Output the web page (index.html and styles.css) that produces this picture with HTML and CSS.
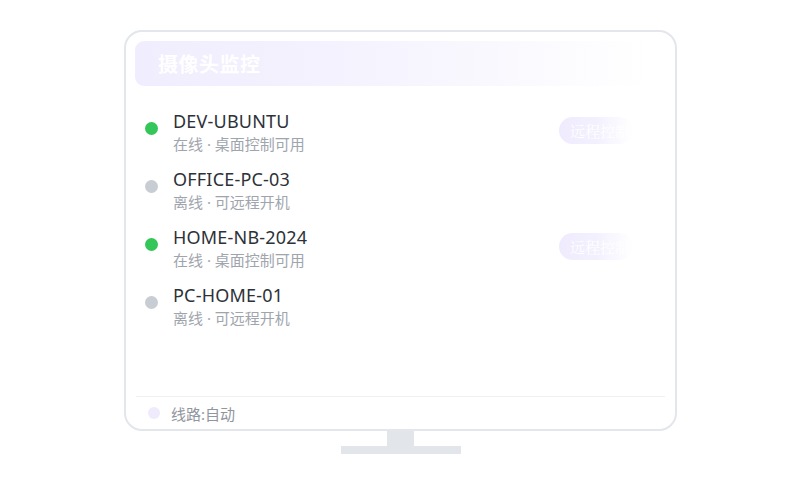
FILE: index.html
```html
<!DOCTYPE html>
<html lang="zh">
<head>
<meta charset="utf-8">
<link rel="stylesheet" href="styles.css">
</head>
<body>
<div class="desk">
  <div class="monitor">
    <div class="header"><span class="title">摄像头监控</span></div>
    <div class="list">
      <div class="row">
        <span class="dot on"></span>
        <div class="info"><div class="name">DEV-UBUNTU</div><div class="sub">在线 · 桌面控制可用</div></div>
        <span class="btn">远程控制</span>
      </div>
      <div class="row">
        <span class="dot off"></span>
        <div class="info"><div class="name">OFFICE-PC-03</div><div class="sub">离线 · 可远程开机</div></div>
      </div>
      <div class="row">
        <span class="dot on"></span>
        <div class="info"><div class="name">HOME-NB-2024</div><div class="sub">在线 · 桌面控制可用</div></div>
        <span class="btn">远程控制</span>
      </div>
      <div class="row">
        <span class="dot off"></span>
        <div class="info"><div class="name">PC-HOME-01</div><div class="sub">离线 · 可远程开机</div></div>
      </div>
    </div>
    <div class="footer"><span class="fdot"></span><span class="ftext">线路:自动</span></div>
  </div>
  <div class="neck"></div>
  <div class="base"></div>
</div>
</body>
</html>
```

FILE: styles.css
```css
html, body { margin: 0; padding: 0; background: #ffffff; }
body { font-family: "Noto Sans", "Noto Sans CJK SC", sans-serif; }
.desk { width: 553px; margin: 30px 0 0 124px; display: flex; flex-direction: column; align-items: center; }
.monitor {
  box-sizing: border-box; width: 553px; height: 401px;
  border: 2px solid #e3e6ea; border-radius: 18px;
  padding: 9px 10px 0 9px;
  display: flex; flex-direction: column;
  background: #fff;
}
.header {
  height: 45px; border-radius: 9px;
  background: linear-gradient(90deg, #f0edfe 0%, #f5f3fe 45%, rgba(255,255,255,0) 100%);
  display: flex; align-items: center; padding-left: 23px;
  margin-right: 14px;
}
.title { color: #ffffff; font-size: 20px; font-weight: 700; font-family: "Noto Sans CJK SC", sans-serif; letter-spacing: 0.5px; }
.list { flex: 1; padding: 24px 0 0 10px; display: flex; flex-direction: column; gap: 14px; }
.row { display: flex; align-items: flex-start; height: 44px; padding-right: 32px; }
.dot { width: 13px; height: 13px; border-radius: 50%; margin-top: 12px; flex: none; }
.dot.on { background: #34c659; }
.dot.off { background: #c8ccd3; }
.info { margin-left: 15px; display: flex; flex-direction: column; gap: 2px; }
.name { font-size: 18px; line-height: 22px; color: #2d3138; letter-spacing: 0.2px; }
.sub { font-size: 15px; line-height: 20px; color: #a0a5ad; }
.btn {
  margin-left: auto; margin-top: 7px; width: 74px; height: 27px; box-sizing: border-box;
  border-radius: 14px; padding-left: 11px;
  background: linear-gradient(90deg, #efebfe 0%, #f3f0fe 50%, rgba(255,255,255,0) 100%);
  color: #ffffff; font-size: 15px; line-height: 27px; white-space: nowrap; overflow: hidden;
  font-family: "Noto Serif CJK SC", serif;
}
.footer { height: 32px; border-top: 1px solid #eef0f4; display: flex; align-items: center; padding-left: 12px; margin-left: 1px; }
.fdot { width: 12px; height: 12px; border-radius: 50%; background: #efebfd; }
.ftext { margin-left: 11px; font-size: 15px; color: #90959e; }
.neck { width: 27px; height: 15px; background: #e2e5e9; }
.base { width: 120px; height: 8px; background: #e2e5e9; }
```
